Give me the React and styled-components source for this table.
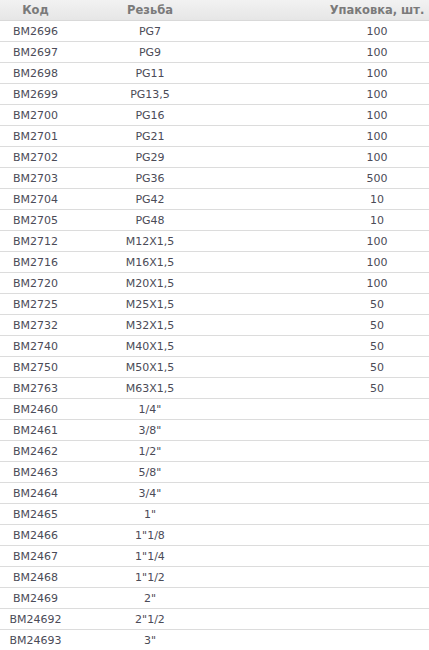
import React from "react";
import styled, { createGlobalStyle } from "styled-components";

const Global = createGlobalStyle`
  html, body { margin: 0; padding: 0; background: #fff; }
  body { font-family: "DejaVu Sans", Verdana, sans-serif; overflow: hidden; }
`;

const Wrap = styled.div`
  width: 429px;
  overflow: hidden;
`;

const Table = styled.table`
  width: 525px;
  border-collapse: collapse;
  table-layout: fixed;
  font-size: 11px;
  color: #4b4b57;
`;

const HeadCell = styled.th`
  height: 20px;
  padding: 0;
  font-weight: bold;
  color: #7a7a7a;
  text-align: center;
  background: linear-gradient(#f2f2f2, #e6e6e6);
  border-bottom: 1px solid #d9d9d9;
  font-size: 11.5px;
`;

const Row = styled.tr`
  height: 21px;
`;

const Cell = styled.td`
  padding: 0;
  height: 20px;
  text-align: center;
  border-bottom: 1px solid #dcdcdc;
  white-space: nowrap;
`;

const rows = [
  ["BM2696", "PG7", "100"],
  ["BM2697", "PG9", "100"],
  ["BM2698", "PG11", "100"],
  ["BM2699", "PG13,5", "100"],
  ["BM2700", "PG16", "100"],
  ["BM2701", "PG21", "100"],
  ["BM2702", "PG29", "100"],
  ["BM2703", "PG36", "500"],
  ["BM2704", "PG42", "10"],
  ["BM2705", "PG48", "10"],
  ["BM2712", "M12X1,5", "100"],
  ["BM2716", "M16X1,5", "100"],
  ["BM2720", "M20X1,5", "100"],
  ["BM2725", "M25X1,5", "50"],
  ["BM2732", "M32X1,5", "50"],
  ["BM2740", "M40X1,5", "50"],
  ["BM2750", "M50X1,5", "50"],
  ["BM2763", "M63X1,5", "50"],
  ["BM2460", "1/4\"", ""],
  ["BM2461", "3/8\"", ""],
  ["BM2462", "1/2\"", ""],
  ["BM2463", "5/8\"", ""],
  ["BM2464", "3/4\"", ""],
  ["BM2465", "1\"", ""],
  ["BM2466", "1\"1/8", ""],
  ["BM2467", "1\"1/4", ""],
  ["BM2468", "1\"1/2", ""],
  ["BM2469", "2\"", ""],
  ["BM24692", "2\"1/2", ""],
  ["BM24693", "3\"", ""],
];

export default function App() {
  return (
    <Wrap>
      <Global />
      <Table>
        <colgroup>
          <col style={{ width: 71 }} />
          <col style={{ width: 158 }} />
          <col style={{ width: 296 }} />
        </colgroup>
        <thead>
          <tr>
            <HeadCell>Код</HeadCell>
            <HeadCell>Резьба</HeadCell>
            <HeadCell>Упаковка, шт.</HeadCell>
          </tr>
        </thead>
        <tbody>
          {rows.map((r) => (
            <Row key={r[0]}>
              <Cell>{r[0]}</Cell>
              <Cell>{r[1]}</Cell>
              <Cell>{r[2]}</Cell>
            </Row>
          ))}
        </tbody>
      </Table>
    </Wrap>
  );
}
